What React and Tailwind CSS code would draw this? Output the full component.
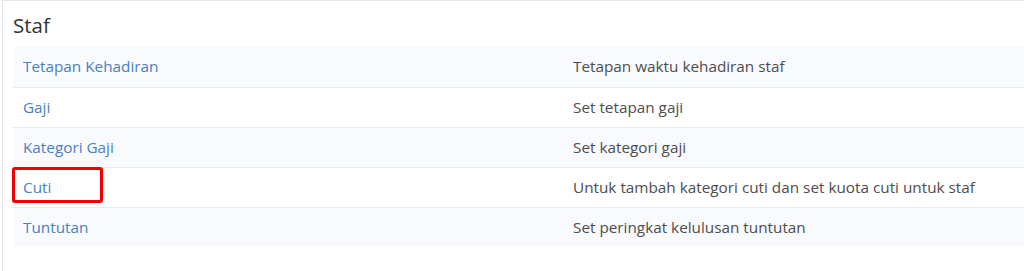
import React from 'react';

const rows = [
  { name: 'Tetapan Kehadiran', desc: 'Tetapan waktu kehadiran staf' },
  { name: 'Gaji', desc: 'Set tetapan gaji' },
  { name: 'Kategori Gaji', desc: 'Set kategori gaji' },
  { name: 'Cuti', desc: 'Untuk tambah kategori cuti dan set kuota cuti untuk staf', marked: true },
  { name: 'Tuntutan', desc: 'Set peringkat kelulusan tuntutan' },
];

export default function App() {
  return (
    <div className="w-[1024px] h-[271px] overflow-hidden bg-white" style={{ fontFamily: '"Open Sans", sans-serif' }}>
      <div className="ml-[2px] h-full border-l border-t border-[#e6e6e6] pl-[10px]">
        <h3 className="pt-[12px] h-[46px] text-[20.5px] leading-[25px] text-[#333]">Staf</h3>
        <table className="w-[1012px] border-collapse text-[15.3px] text-[#4d4d4d]">
          <tbody>
            {rows.map((r, i) => (
              <tr key={r.name} className={i % 2 === 0 ? 'bg-[#f9fafd]' : 'bg-white'}>
                <td className={`relative w-[550px] h-[40px] px-[10px] ${i > 0 ? 'border-t border-[#e7ecf1]' : ''}`}>
                  <a href="#" className="text-[#4a80c2]">{r.name}</a>
                  {r.marked && (
                    <span className="absolute left-[-1px] top-[-1px] w-[91px] h-[36px] border-[3px] border-[#f20000] rounded-[3px]" />
                  )}
                </td>
                <td className={`h-[40px] px-[10px] ${i > 0 ? 'border-t border-[#e7ecf1]' : ''}`}>{r.desc}</td>
              </tr>
            ))}
          </tbody>
        </table>
      </div>
    </div>
  );
}
